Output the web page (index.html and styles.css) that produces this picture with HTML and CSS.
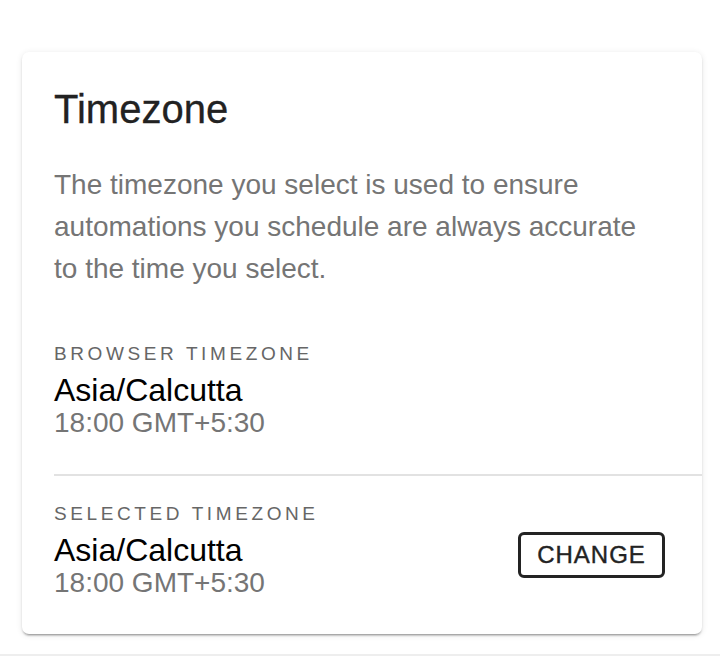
FILE: index.html
```html
<!DOCTYPE html>
<html lang="en">
<head>
<meta charset="utf-8">
<title>Timezone</title>
<link rel="stylesheet" href="styles.css">
</head>
<body>
<div class="page">
  <section class="card">
    <h1 class="title">Timezone</h1>
    <p class="desc">The timezone you select is used to ensure automations you schedule are always accurate to the time you select.</p>
    <ul class="list">
      <li class="item item-divider">
        <div class="info">
          <div class="label">Browser Timezone</div>
          <div class="value">Asia/Calcutta</div>
          <div class="time">18:00 GMT+5:30</div>
        </div>
      </li>
      <li class="item">
        <div class="info">
          <div class="label">Selected Timezone</div>
          <div class="value">Asia/Calcutta</div>
          <div class="time">18:00 GMT+5:30</div>
        </div>
        <button class="btn" type="button">Change</button>
      </li>
    </ul>
  </section>
  <div class="rule"></div>
</div>
</body>
</html>
```

FILE: styles.css
```css
html, body {
  margin: 0;
  padding: 0;
  background: #ffffff;
}

body {
  font-family: "Liberation Sans", Arial, Helvetica, sans-serif;
  color: #212121;
}

.page {
  padding-top: 52px;
}

.card {
  margin: 0 18px 20px 22px;
  background: #ffffff;
  border-radius: 7px;
  padding: 33px 0 0 32px;
  box-shadow: 0 3px 2px -2px rgba(0, 0, 0, 0.28),
              0 2px 2px 0 rgba(0, 0, 0, 0.12),
              0 1px 6px 0 rgba(0, 0, 0, 0.10);
}

.title {
  margin: 0;
  font-size: 40px;
  line-height: 48px;
  font-weight: 400;
  color: #222222;
  -webkit-text-stroke: 0.3px #222222;
}

.desc {
  margin: 31px 0 26px 0;
  max-width: 600px;
  font-size: 28px;
  line-height: 42px;
  color: #757575;
}

.list {
  list-style: none;
  margin: 0;
  padding: 0;
}

.item {
  display: flex;
  align-items: center;
  justify-content: space-between;
  padding: 26px 37px 36px 0;
}

.item-divider {
  border-bottom: 2px solid #e2e2e2;
}

.info {
  display: flex;
  flex-direction: column;
}

.label {
  font-size: 19px;
  line-height: 24px;
  letter-spacing: 3.6px;
  text-transform: uppercase;
  color: #666666;
  margin-bottom: 6px;
}

.value {
  font-size: 32px;
  line-height: 36px;
  color: #000000;
}

.time {
  font-size: 28px;
  line-height: 30px;
  color: #757575;
}

.btn {
  margin-top: 10px;
  box-sizing: border-box;
  width: 147px;
  height: 46px;
  padding: 0;
  border: 3px solid #232323;
  border-radius: 6px;
  background: #ffffff;
  font-family: "Liberation Sans", Arial, Helvetica, sans-serif;
  font-size: 24px;
  line-height: 40px;
  letter-spacing: 1px;
  text-transform: uppercase;
  color: #232323;
  -webkit-text-stroke: 0.4px #232323;
  text-align: center;
}

.rule {
  border-top: 2px solid #eeeeee;
}
```
